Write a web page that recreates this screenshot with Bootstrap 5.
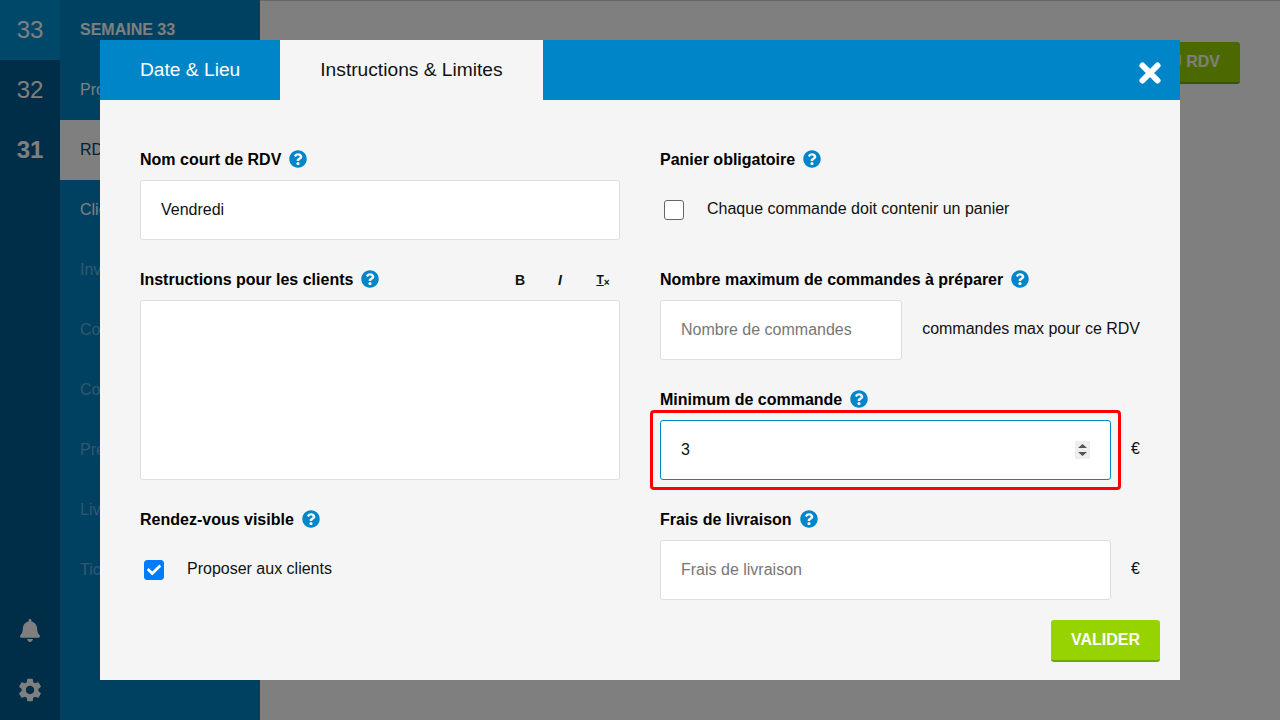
<!DOCTYPE html>
<html lang="fr">
<head>
<meta charset="utf-8">
<title>Instructions &amp; Limites</title>
<link rel="stylesheet" href="https://cdn.jsdelivr.net/npm/bootstrap@5.3.0/dist/css/bootstrap.min.css">
<style>
html,body{height:100%;overflow:hidden}
body{font-family:"Liberation Sans",Arial,sans-serif;font-size:16px;color:#111;background:#fff}
.page-wrap{height:720px}
.week-col{width:60px;background:#005a8f;color:#fff}
.week-num{height:60px;font-size:24px}
.week-current{background:#0090d4}
.week-bottom svg{fill:#fff}
.side-nav{width:200px;background:#0082c4;color:#fff}
.side-item{height:60px;padding-left:20px;white-space:nowrap}
.side-title{font-weight:700;color:#fff}
.side-faded{color:rgba(255,255,255,.4)}
.side-active{background:#fff;color:#00446b}
.main-area{border-top:1px solid #ccc;padding:41px 40px 0 0}
.add-btn{height:42px;background:#97d300;border:0;border-bottom:2px solid #6fa800;border-radius:3px;color:#fff;font-weight:700;padding:0 20px;white-space:nowrap}
.dim-layer{position:fixed;inset:0;background:rgba(0,0,0,.5)}
.dialog-box{position:fixed;left:100px;top:40px;width:1080px;height:640px;background:#f5f5f5}
.dialog-head{height:60px;background:#0085c9}
.head-tab{height:60px;padding:0 40px;font-size:19.2px;color:#fff;border:0;background:transparent}
.head-tab.on{background:#f5f5f5;color:#111}
.close-x{right:18px;top:20px;width:24px;height:24px;border:0;background:transparent;padding:0}
.dialog-main{padding:40px 40px 0}
.dialog-grid{--bs-gutter-x:40px}
.field-label{height:40px;font-weight:700;font-size:16px;margin:0;gap:8px;color:#000}
.help-ic{width:18px;height:18px;fill:#0085c9;flex:none;margin-bottom:2px}
.field-group{margin-bottom:20px}
.txt-input.form-control{height:60px;padding:0 20px;font-size:16px;border:1px solid #ddd;border-radius:3px;color:#111;background:#fff}
.txt-input.form-control::placeholder{color:#777}
.txt-input.form-control:focus{box-shadow:none;border-color:#0085c9}
.red-frame{position:relative}
.red-frame::after{content:"";position:absolute;inset:-10px;border:3px solid #f00;border-radius:4px;pointer-events:none}
.spin-shown::-webkit-inner-spin-button{-webkit-appearance:none;opacity:1;width:15px;height:18px;background:#eee url("data:image/svg+xml,%3csvg xmlns='http://www.w3.org/2000/svg' width='15' height='18'%3e%3cpath d='M3 7 7.500 3 12 7zM3 11h9l-4.500 4z' fill='%23555'/%3e%3c/svg%3e") center no-repeat}
.rich-area{height:180px;background:#fff;border:1px solid #ddd;border-radius:3px}
.short-input{width:242px;flex:none}
.after-input{margin-bottom:2px}
.check-row{height:60px;padding-left:4px;gap:23px}
.check-row .form-check-input{width:20px;height:20px;margin:0;flex:none;border-radius:3px;border-color:#666}
.check-row .form-check-input:checked[type=checkbox]{border-color:#007bff;background-color:#007bff;background-size:14px;background-image:url("data:image/svg+xml,%3csvg xmlns='http://www.w3.org/2000/svg' viewBox='0 0 512 512'%3e%3cpath fill='%23fff' d='M173.898 439.404l-166.4-166.4c-9.997-9.997-9.997-26.206 0-36.204l36.203-36.204c9.997-10.998 26.207-9.998 36.204 0L192 312.69 432.095 72.596c9.997-9.997 26.207-9.997 36.204 0l36.203 36.204c9.997 9.997 9.997 26.206 0 36.204l-294.4 294.401c-9.998 9.997-26.207 9.997-36.204-.001z'/%3e%3c/svg%3e")}
.check-row span{position:relative;top:-1px}
.tool-btn{width:40px;font-size:14px;font-weight:700;background:transparent;border:0;padding:0;color:#111;text-align:center}
.tool-clear{font-size:12px;padding-left:6px}
.tool-x{font-size:10px;vertical-align:-2px}
.tool-t{text-decoration:underline}
.ok-btn{height:42px;width:109px;background:#97d300;border:0;border-bottom:2px solid #6fa800;border-radius:3px;color:#fff;font-weight:700;font-size:16px;padding:0}
.dialog-foot{padding-right:20px;margin-bottom:18px}
</style>
</head>
<body>
<div class="page-wrap d-flex">
  <div class="week-col d-flex flex-column">
    <div class="week-num week-current d-flex align-items-center justify-content-center">33</div>
    <div class="week-num d-flex align-items-center justify-content-center">32</div>
    <div class="week-num d-flex align-items-center justify-content-center fw-bold">31</div>
    <div class="week-bottom mt-auto d-flex flex-column align-items-center">
      <div class="week-num d-flex align-items-center justify-content-center"><svg width="20" height="23" viewBox="0 0 448 512"><path d="M224 512c35.32 0 63.97-28.65 63.97-64H160.03c0 35.35 28.65 64 63.97 64zm215.39-149.71c-19.32-20.76-55.47-51.99-55.47-154.29 0-77.7-54.48-139.9-127.94-155.16V32c0-17.67-14.32-32-31.98-32s-31.98 14.33-31.98 32v20.84C118.56 68.1 64.08 130.3 64.08 208c0 102.3-36.15 133.53-55.47 154.29-6 6.45-8.66 14.16-8.61 21.71.11 16.4 12.98 32 32.1 32h383.8c19.12 0 32-15.6 32.1-32 .05-7.55-2.61-15.27-8.61-21.71z"/></svg></div>
      <div class="week-num d-flex align-items-center justify-content-center"><svg width="28" height="28" viewBox="0 0 24 24"><path d="M19.14 12.94c.04-.3.06-.61.06-.94 0-.32-.02-.64-.07-.94l2.03-1.58a.49.49 0 0 0 .12-.61l-1.92-3.32a.488.488 0 0 0-.59-.22l-2.39.96c-.5-.38-1.03-.7-1.62-.94l-.36-2.54a.484.484 0 0 0-.48-.41h-3.84c-.24 0-.43.17-.47.41l-.36 2.54c-.59.24-1.13.57-1.62.94l-2.39-.96c-.22-.08-.47 0-.59.22L2.74 8.87c-.12.21-.08.47.12.61l2.03 1.58c-.05.3-.09.63-.09.94s.02.64.07.94l-2.03 1.58a.49.49 0 0 0-.12.61l1.92 3.32c.12.22.37.29.59.22l2.39-.96c.5.38 1.03.7 1.62.94l.36 2.54c.05.24.24.41.48.41h3.84c.24 0 .44-.17.47-.41l.36-2.54c.59-.24 1.13-.56 1.62-.94l2.39.96c.22.08.47 0 .59-.22l1.92-3.32c.12-.22.07-.47-.12-.61l-2.01-1.58zM12 15.6c-1.98 0-3.6-1.62-3.6-3.6s1.62-3.6 3.6-3.6 3.6 1.62 3.6 3.6-1.62 3.6-3.6 3.6z"/></svg></div>
    </div>
  </div>
  <div class="side-nav d-flex flex-column">
    <div class="side-item side-title d-flex align-items-center">SEMAINE 33</div>
    <div class="side-item d-flex align-items-center">Produits</div>
    <div class="side-item side-active d-flex align-items-center">RDV</div>
    <div class="side-item d-flex align-items-center">Clients</div>
    <div class="side-item side-faded d-flex align-items-center">Inventaire</div>
    <div class="side-item side-faded d-flex align-items-center">Commandes</div>
    <div class="side-item side-faded d-flex align-items-center">Compta</div>
    <div class="side-item side-faded d-flex align-items-center">Préparer</div>
    <div class="side-item side-faded d-flex align-items-center">Livrer</div>
    <div class="side-item side-faded d-flex align-items-center">Tickets</div>
  </div>
  <div class="main-area flex-grow-1 d-flex justify-content-end align-items-start">
    <button class="add-btn">NOUVEAU RDV</button>
  </div>
</div>
<div class="dim-layer"></div>
<div class="dialog-box d-flex flex-column">
  <div class="dialog-head d-flex position-relative">
    <button class="head-tab">Date &amp; Lieu</button>
    <button class="head-tab on">Instructions &amp; Limites</button>
    <button class="close-x position-absolute" aria-label="Fermer"><svg width="24" height="24" viewBox="0 0 24 24"><path d="M4.500 4.500 19.500 19.500M19.500 4.500 4.500 19.500" stroke="#fff" stroke-width="6" stroke-linecap="round" fill="none"/></svg></button>
  </div>
  <div class="dialog-main">
    <div class="row dialog-grid">
      <div class="col-6">
        <div class="field-group">
          <label class="field-label d-flex align-items-center">Nom court de RDV <svg class="help-ic" viewBox="0 0 512 512"><use href="#q"/></svg></label>
          <input class="form-control txt-input" type="text" value="Vendredi">
        </div>
        <div class="field-group">
          <div class="d-flex align-items-center justify-content-between">
            <label class="field-label d-flex align-items-center">Instructions pour les clients <svg class="help-ic" viewBox="0 0 512 512"><use href="#q"/></svg></label>
            <div class="d-flex">
              <button class="tool-btn">B</button>
              <button class="tool-btn fst-italic">I</button>
              <button class="tool-btn tool-clear"><span class="tool-t">T</span><span class="tool-x">×</span></button>
            </div>
          </div>
          <div class="rich-area"></div>
        </div>
        <div class="field-group">
          <label class="field-label d-flex align-items-center">Rendez-vous visible <svg class="help-ic" viewBox="0 0 512 512"><use href="#q"/></svg></label>
          <label class="check-row d-flex align-items-center"><input class="form-check-input" type="checkbox" checked><span>Proposer aux clients</span></label>
        </div>
      </div>
      <div class="col-6">
        <div class="field-group">
          <label class="field-label d-flex align-items-center">Panier obligatoire <svg class="help-ic" viewBox="0 0 512 512"><use href="#q"/></svg></label>
          <label class="check-row d-flex align-items-center"><input class="form-check-input" type="checkbox"><span>Chaque commande doit contenir un panier</span></label>
        </div>
        <div class="field-group">
          <label class="field-label d-flex align-items-center">Nombre maximum de commandes à préparer <svg class="help-ic" viewBox="0 0 512 512"><use href="#q"/></svg></label>
          <div class="d-flex align-items-center justify-content-between">
            <input class="form-control txt-input short-input" type="number" placeholder="Nombre de commandes">
            <span class="after-input">commandes max pour ce RDV</span>
          </div>
        </div>
        <div class="field-group">
          <label class="field-label d-flex align-items-center">Minimum de commande <svg class="help-ic" viewBox="0 0 512 512"><use href="#q"/></svg></label>
          <div class="d-flex align-items-center justify-content-between">
            <div class="red-frame flex-grow-1 me-3"><input class="form-control txt-input spin-shown" type="number" value="3" autofocus></div>
            <span class="ms-1 after-input">€</span>
          </div>
        </div>
        <div>
          <label class="field-label d-flex align-items-center">Frais de livraison <svg class="help-ic" viewBox="0 0 512 512"><use href="#q"/></svg></label>
          <div class="d-flex align-items-center justify-content-between">
            <input class="form-control txt-input me-3 flex-grow-1 w-auto" type="number" placeholder="Frais de livraison">
            <span class="ms-1 after-input">€</span>
          </div>
        </div>
      </div>
    </div>
  </div>
  <div class="dialog-foot d-flex justify-content-end mt-auto">
    <button class="ok-btn">VALIDER</button>
  </div>
</div>
<svg width="0" height="0" class="position-absolute"><defs><path id="q" d="M504 256c0 136.997-111.043 248-248 248S8 392.997 8 256C8 119.083 119.043 8 256 8s248 111.083 248 248zM262.655 90c-54.497 0-89.255 22.957-116.549 63.758-3.536 5.286-2.353 12.415 2.715 16.258l34.699 26.31c5.205 3.947 12.621 3.008 16.665-2.122 17.864-22.658 30.113-35.797 57.303-35.797 20.429 0 45.698 13.148 45.698 32.958 0 14.976-12.363 22.667-32.534 33.976C247.128 238.528 216 254.941 216 296v4c0 6.627 5.373 12 12 12h56c6.627 0 12-5.373 12-12v-1.333c0-28.462 83.186-29.647 83.186-106.667 0-58.002-60.165-102-116.531-102zM256 338c-25.365 0-46 20.635-46 46 0 25.364 20.635 46 46 46s46-20.636 46-46c0-25.365-20.635-46-46-46z"/></defs></svg>
<script src="https://cdn.jsdelivr.net/npm/bootstrap@5.3.0/dist/js/bootstrap.bundle.min.js"></script>
</body>
</html>
